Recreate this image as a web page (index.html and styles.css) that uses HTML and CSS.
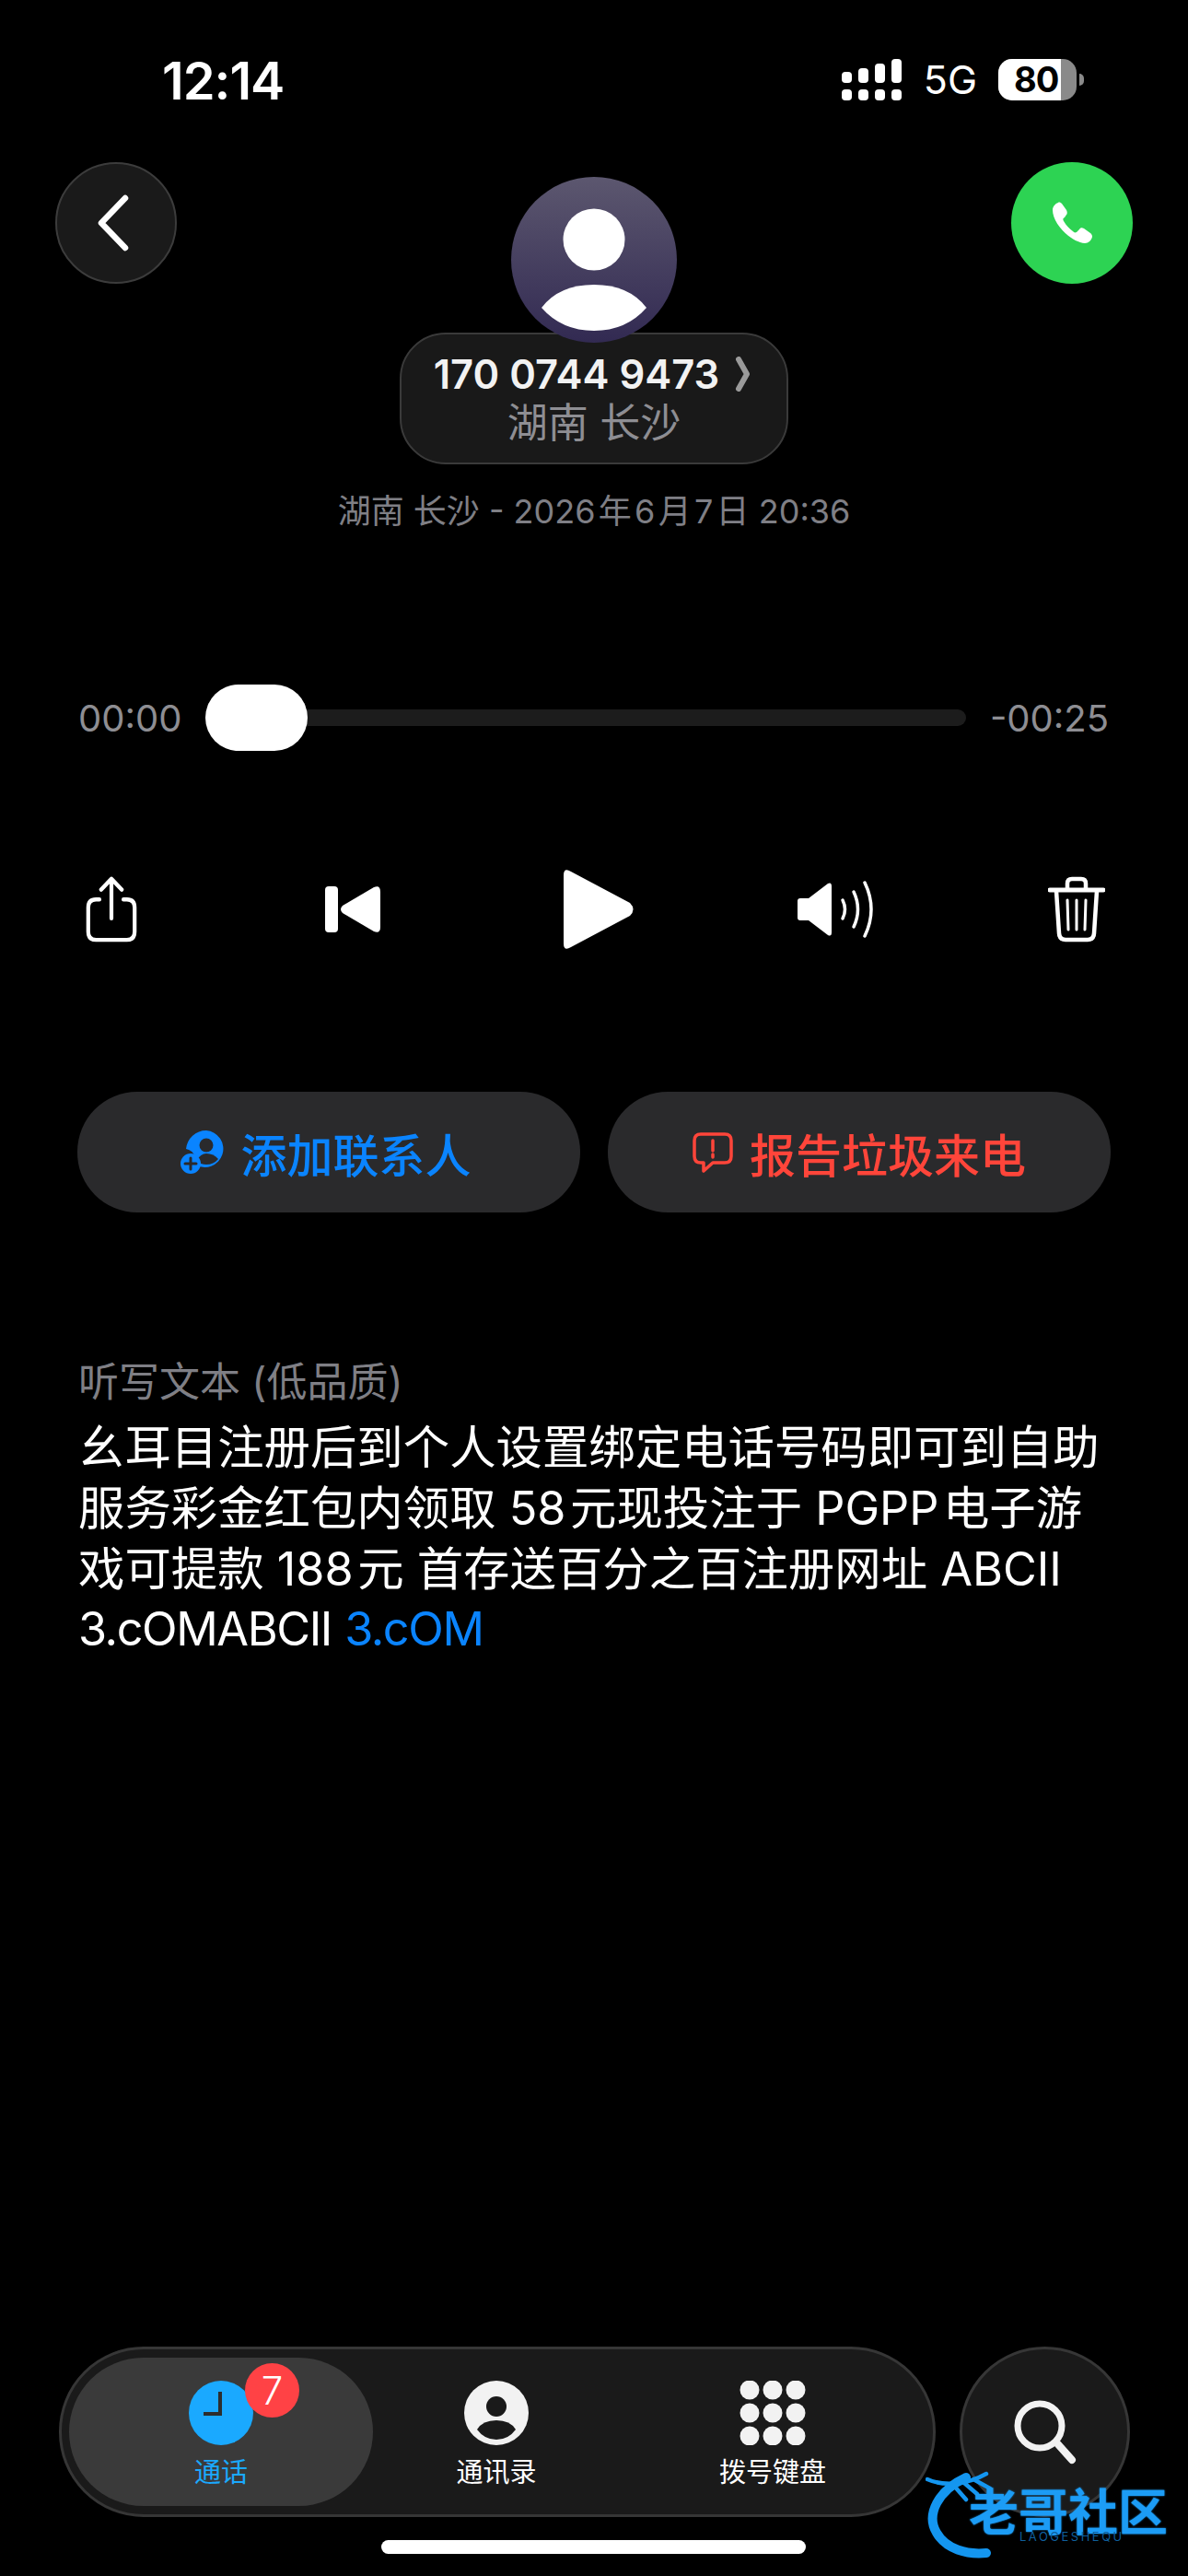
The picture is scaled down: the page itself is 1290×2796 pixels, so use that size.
FILE: index.html
```html
<!DOCTYPE html>
<html lang="zh-CN">
<head>
    <meta charset="UTF-8" />
    <title>语音留言</title>
    <link rel="stylesheet" href="styles.css">
</head>
<body>
<div class="phone">

    <!-- status bar -->
    <div class="status">
        <div class="clock">12:14</div>
        <div class="status-right">
            <svg class="signal" width="65" height="45" viewBox="0 0 65 45" fill="#fff">
                <rect x="0" y="14" width="11" height="12" rx="4"/><rect x="18" y="10" width="11" height="16" rx="4"/><rect x="36" y="5" width="11" height="21" rx="4"/><rect x="54" y="0" width="11" height="26" rx="4"/>
                <rect x="0" y="33" width="11" height="12" rx="4"/><rect x="18" y="33" width="11" height="12" rx="4"/><rect x="36" y="33" width="11" height="12" rx="4"/><rect x="54" y="33" width="11" height="12" rx="4"/>
            </svg>
            <span class="net">5G</span>
            <div class="battery"><span class="battery-fill">80</span></div>
            <div class="battery-cap"></div>
        </div>
    </div>

    <!-- header -->
    <div class="header">
        <div class="round-btn back">
            <svg width="44" height="66" viewBox="0 0 44 66" fill="none" stroke="#fff" stroke-width="6.5" stroke-linecap="round" stroke-linejoin="round"><path d="M35 6 L9 33 L35 60"/></svg>
        </div>
        <div class="who">
            <svg class="avatar" width="180" height="180" viewBox="0 0 180 180">
                <defs><linearGradient id="av" x1="0" y1="0" x2="0" y2="1"><stop offset="0" stop-color="#5c576f"/><stop offset="1" stop-color="#322a52"/></linearGradient></defs>
                <circle cx="90" cy="90" r="90" fill="url(#av)"/>
                <circle cx="90" cy="68" r="33.5" fill="#fff"/>
                <path d="M33 142 Q52 117 90 117 Q128 117 147 142 Q125 167 90 167 Q55 167 33 142Z" fill="#fff"/>
            </svg>
            <div class="name-pill">
                <div class="number">170 0744 9473
                    <svg width="18" height="38" viewBox="0 0 18 38" fill="none" stroke="#9a9a9a" stroke-width="6" stroke-linecap="round" stroke-linejoin="round"><path d="M5 3 L14 19 L5 35"/></svg>
                </div>
                <div class="place">湖南 长沙</div>
            </div>
        </div>
        <div class="round-btn call">
            <svg width="46" height="46" viewBox="0 0 46 46" fill="#fff"><path d="M8 1C5 2 2 5 2 9C2 24 22 44 37 45C41 45 44 42 45 38C45 36 44 35 43 34L36 29C34 28 32 28 31 30L28 33C26 34 25 33 24 32C20 29 17 26 14 21C13 19 13 18 15 17L17 14C18 13 18 11 17 9L12 2C11 1 9 0 8 1Z"/></svg>
        </div>
    </div>

    <div class="meta">湖南 长沙 - 2026&#8202;年&#8202;6&#8202;月&#8202;7&#8202;日 20:36</div>

    <!-- player -->
    <div class="scrub">
        <span class="time">00:00</span>
        <div class="track"><div class="thumb"></div></div>
        <span class="time">-00:25</span>
    </div>

    <div class="controls">
        <svg width="56" height="72" viewBox="0 0 60 74" fill="none" stroke="#fff" stroke-width="4.5" stroke-linecap="round" stroke-linejoin="round" preserveAspectRatio="none">
            <path d="M16 26 H12 Q3 26 3 35 V62 Q3 71 12 71 H48 Q57 71 57 62 V35 Q57 26 48 26 H44"/>
            <path d="M30 47 V3 M18 15 L30 3 L42 15"/>
        </svg>
        <svg width="60" height="50" viewBox="0 0 60 50" fill="#fff">
            <rect x="0" y="0" width="14" height="50" rx="4"/>
            <path d="M17 25 Q17 23 19 21 L53 1 Q60 -2 60 6 V44 Q60 52 53 49 L19 29 Q17 27 17 25Z"/>
        </svg>
        <svg class="play" width="76" height="86" viewBox="0 0 76 86" fill="#fff"><path d="M0 6 Q0 -3 8 2 L72 36 Q79 43 72 50 L8 84 Q0 89 0 80Z"/></svg>
        <svg class="speaker" width="88" height="64" viewBox="0 0 88 64">
            <path d="M1 23 Q1 20 4 20 H13 L34 4 Q38 2 38 7 V57 Q38 62 34 60 L13 44 H4 Q1 44 1 41Z" fill="#fff"/>
            <g fill="none" stroke="#fff" stroke-width="3.5" stroke-linecap="round"><path d="M50 22 Q55 32 50 42"/><path d="M62 13 Q71 32 62 51"/><path d="M74 3 Q88 32 74 61"/></g>
        </svg>
        <svg width="62" height="72" viewBox="0 0 62 72" fill="none" stroke="#fff" stroke-linecap="round" stroke-linejoin="round">
            <path d="M2 15 H60" stroke-width="5"/>
            <path d="M21 14 V8 Q21 3 26 3 H36 Q41 3 41 8 V14" stroke-width="4.5"/>
            <path d="M9 16 L12 62 Q12.5 69 19 69 H43 Q49.5 69 50 62 L53 16" stroke-width="4.5"/>
            <path d="M21 26 L22 58 M31 26 V58 M41 26 L40 58" stroke-width="3"/>
        </svg>
    </div>

    <!-- actions -->
    <div class="actions">
        <div class="action blue">
            <svg width="48" height="48" viewBox="0 0 48 48">
                <path d="M28 0 A20 20 0 1 1 16 37 V30 A12 12 0 0 0 6 20 A22 22 0 0 1 28 0Z" fill="#0a84ff"/>
                <circle cx="28" cy="16" r="7.5" fill="#2a2a2c"/>
                <path d="M17 33 Q22 25 28 25 Q36 25 41 31 Q36 37 28 37 Q22 37 17 33Z" fill="#2a2a2c"/>
                <circle cx="11" cy="36" r="11" fill="#0a84ff"/>
                <path d="M11 30 V42 M5 36 H17" stroke="#2a2a2c" stroke-width="3" stroke-linecap="round"/>
            </svg>
            添加联系人
        </div>
        <div class="action red">
            <svg width="44" height="44" viewBox="0 0 44 44" fill="none" stroke="#ff453a" stroke-width="3.5" stroke-linejoin="round">
                <path d="M9 2 H35 Q42 2 42 9 V26 Q42 33 35 33 H22 L12 42 V33 H9 Q2 33 2 26 V9 Q2 2 9 2Z"/>
                <path d="M22 9 V20 M22 24 V27" stroke-linecap="round"/>
            </svg>
            报告垃圾来电
        </div>
    </div>

    <!-- transcript -->
    <div class="transcript">
        <div class="transcript-label">听写文本 (低品质)</div>
        <p class="transcript-text">幺耳目注册后到个人设置绑定电话号码即可到自助服务彩金红包内领取 58&#8202;元现投注于 PGPP&#8202;电子游戏可提款 188&#8202;元 首存送百分之百注册网址 ABCII <span class="latin">3.cOMABCII</span> <span class="latin link">3.cOM</span></p>
    </div>

    <!-- tab bar -->
    <div class="bottom">
        <div class="tabbar">
            <div class="tab tab-active">
                <div class="tab-icon">
                    <svg width="70" height="70" viewBox="0 0 70 70"><circle cx="35" cy="35" r="35" fill="#1aa9ff"/><path d="M34 12 V36 H16" fill="none" stroke="#2d2d2d" stroke-width="4"/></svg>
                    <span class="badge">7</span>
                </div>
                <span class="tab-label">通话</span>
            </div>
            <div class="tab">
                <div class="tab-icon">
                    <svg width="70" height="70" viewBox="0 0 70 70"><circle cx="35" cy="35" r="35" fill="#f2f2f2"/><circle cx="35" cy="28" r="11" fill="#1a1a1a"/><path d="M14 53 Q20 43 35 43 Q50 43 56 53 Q48 64 35 64 Q22 64 14 53Z" fill="#1a1a1a"/></svg>
                </div>
                <span class="tab-label">通讯录</span>
            </div>
            <div class="tab">
                <div class="tab-icon">
                    <svg width="72" height="70" viewBox="0 0 72 70" fill="#f2f2f2">
                        <circle cx="11" cy="10" r="10.5"/><circle cx="36" cy="10" r="10.5"/><circle cx="61" cy="10" r="10.5"/>
                        <circle cx="11" cy="35" r="10.5"/><circle cx="36" cy="35" r="10.5"/><circle cx="61" cy="35" r="10.5"/>
                        <circle cx="11" cy="60" r="10.5"/><circle cx="36" cy="60" r="10.5"/><circle cx="61" cy="60" r="10.5"/>
                    </svg>
                </div>
                <span class="tab-label">拨号键盘</span>
            </div>
        </div>
        <div class="search">
            <svg width="68" height="70" viewBox="0 0 68 70" fill="none" stroke="#f2f2f2" stroke-linecap="round"><circle cx="28" cy="28" r="24" stroke-width="7"/><path d="M46 46 L63 65" stroke-width="8"/></svg>
        </div>
    </div>

    <div class="home-bar"></div>

    <!-- watermark -->
    <div class="watermark">
        <svg class="wm-swirl" width="110" height="100" viewBox="0 0 110 100" fill="none" stroke="#1496f0" stroke-linecap="round">
            <path d="M44 12 C14 26 0 52 12 72 C22 90 45 96 66 94" stroke-width="10"/>
            <path d="M2 14 C20 22 45 20 66 8 M30 20 L44 36 M42 18 L56 30 M52 14 L70 24" stroke-width="4.5"/>
        </svg>
        <div class="wm-text">老哥社区</div>
        <div class="wm-sub">LAOGESHEQU</div>
    </div>
</div>
</body>
</html>
```

FILE: styles.css
```css
* {
    box-sizing: border-box;
}

body {
    margin: 0;
    background-color: #000;
    color: #fff;
    font-family: Inter, "Noto Sans CJK SC", sans-serif;
}

.phone {
    position: relative;
    width: 1290px;
    height: 2796px;
    overflow: hidden;
    display: flex;
    flex-direction: column;
}

/* status bar */
.status {
    height: 176px;
    flex: none;
    display: flex;
    justify-content: space-between;
    align-items: flex-start;
    padding: 58px 113px 0 176px;
}

.clock {
    font-size: 56px;
    font-weight: 600;
    line-height: 60px;
    letter-spacing: -1px;
}

.status-right {
    display: flex;
    align-items: center;
    padding-top: 6px;
}

.signal {
    margin-right: 24px;
}

.net {
    font-size: 43px;
    font-weight: 400;
    line-height: 45px;
    margin-right: 23px;
}

.battery {
    width: 85px;
    height: 45px;
    border-radius: 15px;
    overflow: hidden;
    background-color: #8a8a8a;
}

.battery-fill {
    display: block;
    width: 68px;
    height: 45px;
    background-color: #fff;
    color: #000;
    font-size: 38px;
    font-weight: 700;
    line-height: 45px;
    padding-left: 17px;
    letter-spacing: -1px;
    white-space: nowrap;
}

.battery-cap {
    width: 5px;
    height: 13px;
    margin-left: 3px;
    background-color: #8a8a8a;
    border-radius: 0 6px 6px 0;
}

/* header */
.header {
    flex: none;
    display: flex;
    justify-content: space-between;
    align-items: flex-start;
    padding: 0 60px;
}

.round-btn {
    width: 132px;
    height: 132px;
    border-radius: 50%;
    display: flex;
    align-items: center;
    justify-content: center;
}

.back {
    background-color: #1a1a1a;
    border: 2px solid #3c3c3c;
}

.back svg {
    margin-left: -6px;
}

.call {
    background-color: #2dd353;
}

.who {
    display: flex;
    flex-direction: column;
    align-items: center;
    padding-top: 16px;
}

.avatar {
    position: relative;
    z-index: 1;
    display: block;
}

.name-pill {
    width: 422px;
    height: 143px;
    margin-top: -11px;
    background-color: #191919;
    border: 2px solid #3a3a3a;
    border-radius: 50px;
    display: flex;
    flex-direction: column;
    align-items: center;
    padding-top: 18px;
}

.number {
    display: flex;
    align-items: center;
    gap: 16px;
    padding-right: 4px;
    font-size: 43.5px;
    font-weight: 600;
    line-height: 50px;
    color: #f2f2f2;
}

.place {
    font-size: 44px;
    line-height: 56px;
    color: #8e8e93;
}

.meta {
    flex: none;
    margin-top: 25px;
    text-align: center;
    font-size: 36px;
    line-height: 52px;
    color: #7f7f85;
}

/* player */
.scrub {
    flex: none;
    margin-top: 162px;
    padding: 0 86px 0 85px;
    height: 72px;
    display: flex;
    align-items: center;
    justify-content: space-between;
}

.time {
    font-size: 40px;
    color: #8e8e93;
}

.track {
    position: relative;
    width: 826px;
    height: 18px;
    border-radius: 9px;
    background-color: #1c1c1c;
}

.thumb {
    position: absolute;
    left: 0;
    top: -27px;
    width: 111px;
    height: 72px;
    border-radius: 36px;
    background-color: #fff;
}

.controls {
    flex: none;
    margin-top: 127px;
    height: 90px;
    display: grid;
    grid-template-columns: repeat(5, 262px);
    justify-content: center;
    justify-items: center;
    align-items: center;
}

.play {
    margin-left: 10px;
}

.speaker {
    margin-left: 4px;
}

/* actions */
.actions {
    flex: none;
    margin-top: 153px;
    padding: 0 84px;
    display: flex;
    gap: 30px;
}

.action {
    width: 546px;
    height: 131px;
    border-radius: 65px;
    background-color: #2a2a2c;
    display: flex;
    align-items: center;
    justify-content: center;
    gap: 18px;
    font-size: 50px;
    font-weight: 500;
}

.blue {
    color: #0a84ff;
    padding-right: 7px;
}

.red {
    color: #ff453a;
}

/* transcript */
.transcript {
    flex: none;
    margin-top: 154px;
    padding-left: 85px;
}

.transcript-label {
    font-size: 44px;
    line-height: 60px;
    color: #7f7f85;
}

.transcript-text {
    margin: 8px 0 0;
    width: 1122px;
    font-size: 50.4px;
    line-height: 65.8px;
}

.latin {
    letter-spacing: -1.4px;
}

.link {
    color: #0a84ff;
}

/* tab bar */
.bottom {
    margin-top: auto;
    flex: none;
    display: flex;
    gap: 26px;
    padding-left: 64px;
}

.tabbar {
    width: 952px;
    height: 185px;
    border-radius: 92px;
    background-color: #1a1a1a;
    border: 3px solid #363636;
    padding: 9px 8px;
    display: flex;
}

.tab {
    width: 300px;
    display: flex;
    flex-direction: column;
    align-items: center;
    padding-top: 25px;
}

.tab-active {
    width: 330px;
    margin-right: -16px;
    background-color: #3a3a3a;
    border-radius: 82px;
    color: #1aa9ff;
}

.tab-icon {
    position: relative;
    height: 70px;
}

.tab-icon svg {
    display: block;
}

.badge {
    position: absolute;
    left: 61px;
    top: -19px;
    width: 59px;
    height: 59px;
    border-radius: 50%;
    background-color: #ff4245;
    color: #fff;
    font-size: 42px;
    font-weight: 300;
    line-height: 59px;
    text-align: center;
}

.tab-label {
    margin-top: 9px;
    font-size: 29px;
    line-height: 42px;
}

.search {
    width: 185px;
    height: 185px;
    border-radius: 50%;
    background-color: #1a1a1a;
    border: 3px solid #363636;
    display: flex;
    align-items: center;
    justify-content: center;
}

.home-bar {
    flex: none;
    width: 461px;
    height: 15px;
    margin: 25px 0 24px 414px;
    border-radius: 8px;
    background-color: #fff;
}

/* watermark */
.watermark {
    position: absolute;
    left: 1005px;
    top: 2677px;
    width: 270px;
    height: 100px;
}

.wm-swirl {
    position: absolute;
    left: 0;
    top: 0;
}

.wm-text {
    position: absolute;
    left: 47px;
    top: 21px;
    font-size: 54px;
    font-weight: 700;
    line-height: 60px;
    white-space: nowrap;
    color: #1c9cf5;
    text-shadow: 0 0 2px #1c9cf5;
}

.wm-sub {
    position: absolute;
    left: 102px;
    top: 68px;
    font-size: 13px;
    letter-spacing: 2.5px;
    white-space: nowrap;
    color: #0f5f9c;
}
```
